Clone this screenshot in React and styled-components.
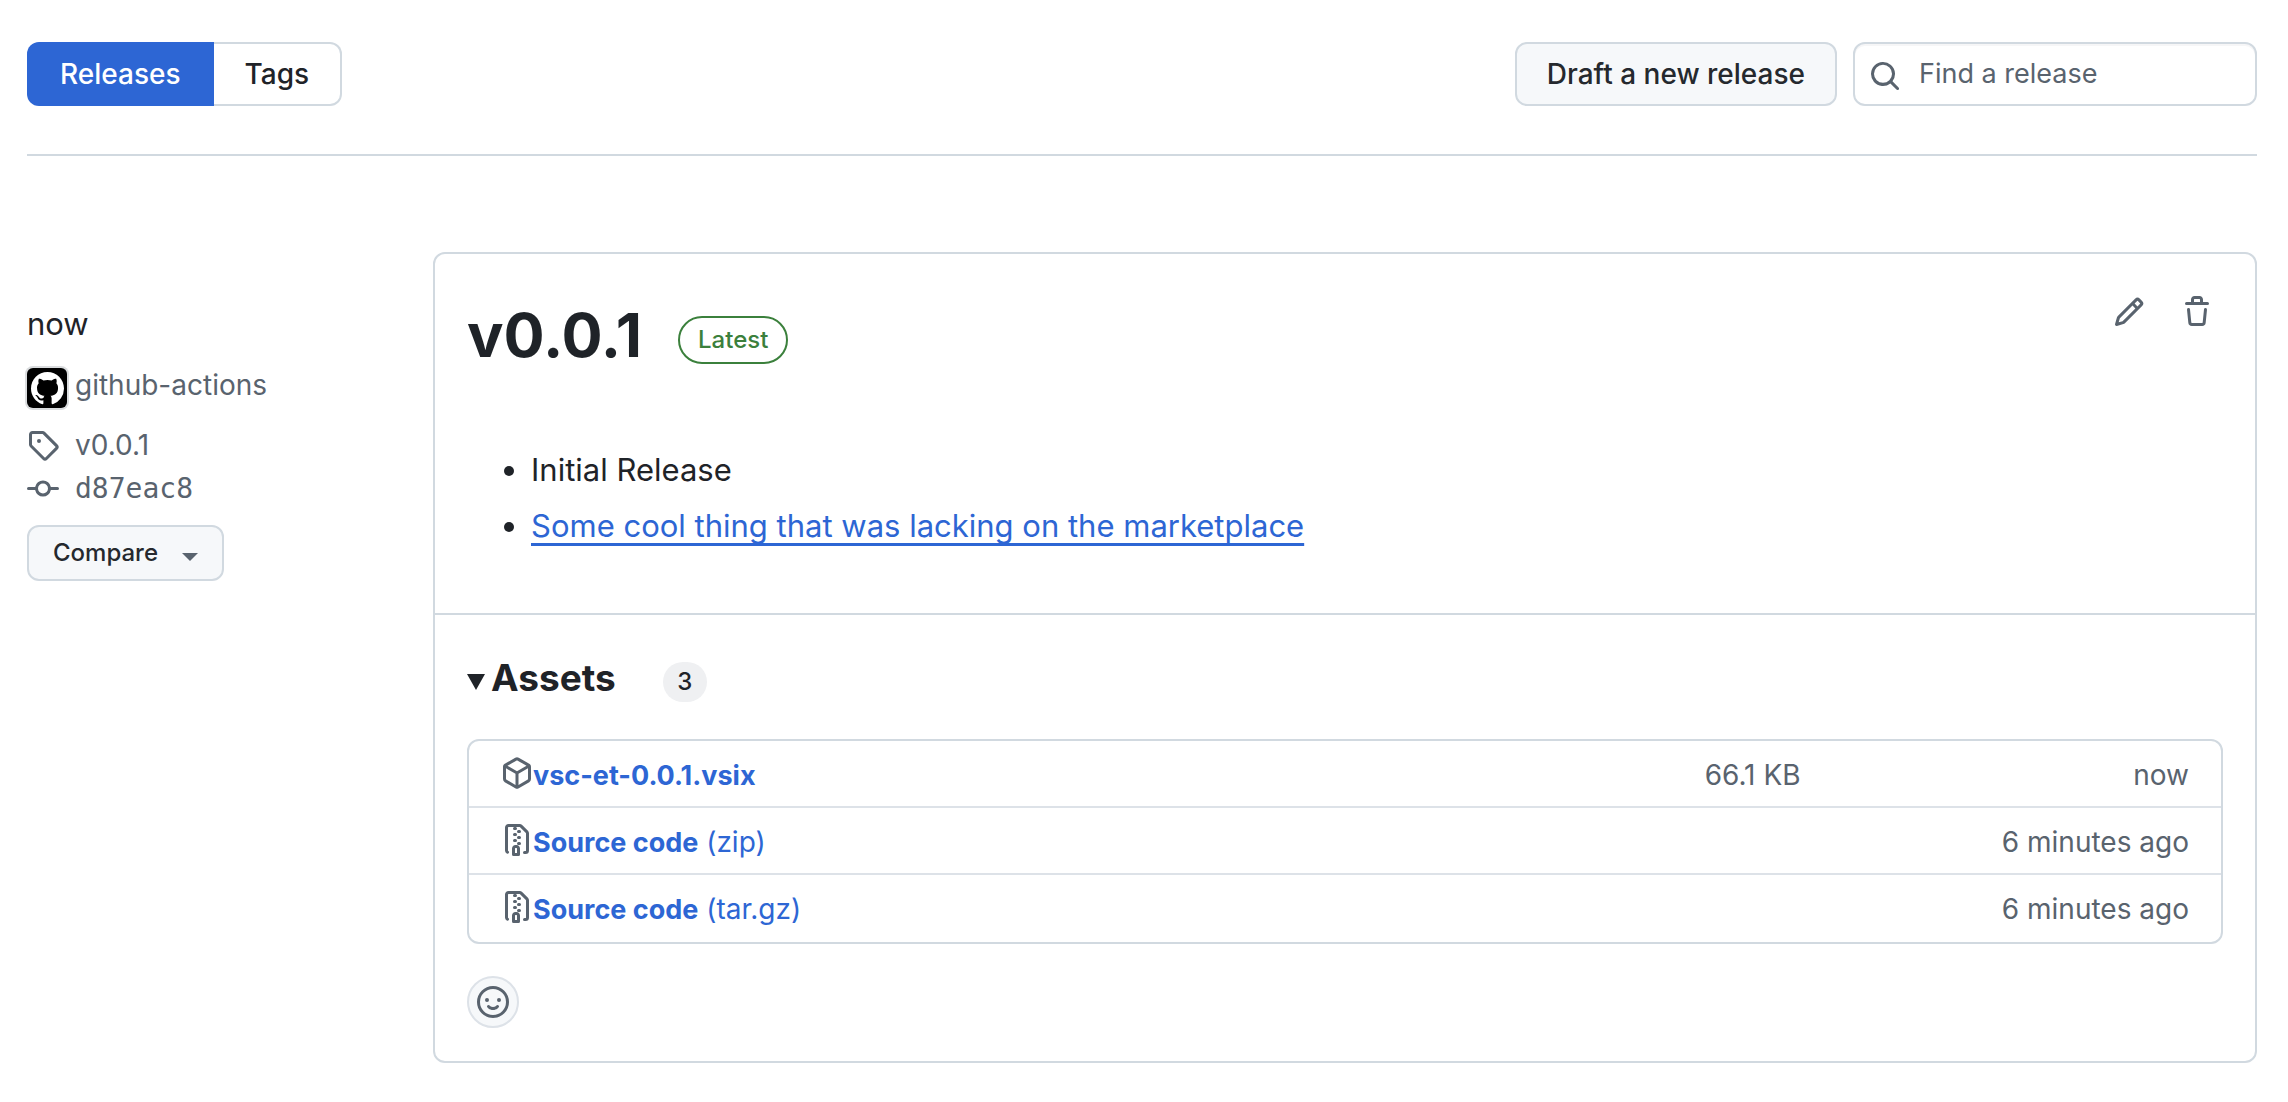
import React from "react";
import styled, { createGlobalStyle, css } from "styled-components";

const color = {
  text: "#1f2328",
  muted: "#59636e",
  border: "#d1d9e0",
  rowBorder: "#dde2e8",
  subtle: "#f6f8fa",
  accent: "#2d66d4",
  green: "#3b803c",
};

const GlobalStyle = createGlobalStyle`
  *, *::before, *::after { box-sizing: border-box; }
  body {
    margin: 0;
    background: #ffffff;
    color: ${color.text};
    font-family: Inter, "Liberation Sans", sans-serif;
    font-size: 28px;
    line-height: 42px;
  }
  button, input { font: inherit; color: inherit; }
  a { color: inherit; text-decoration: none; }
`;

const Page = styled.div`
  padding: 42px 31px 32px 27px;
`;

/* ---------- Header ---------- */

const Header = styled.header`
  display: flex;
  justify-content: space-between;
  align-items: center;
  padding-bottom: 48px;
  border-bottom: 2px solid ${color.border};
`;

const Tabs = styled.nav`
  display: flex;
`;

const Tab = styled.a`
  display: flex;
  align-items: center;
  height: 64px;
  padding: 0 31px;
  font-weight: 500;
  border: 2px solid ${color.border};
  border-left: 0;
  border-radius: 0 12px 12px 0;
  ${(p) =>
    p.$active &&
    css`
      padding: 0 33px;
      color: #ffffff;
      background: ${color.accent};
      border: 0;
      border-radius: 12px 0 0 12px;
    `}
`;

const Tools = styled.div`
  display: flex;
  gap: 16px;
`;

const Button = styled.button`
  display: flex;
  align-items: center;
  gap: 24px;
  height: ${(p) => (p.$small ? 56 : 64)}px;
  padding: 0 ${(p) => (p.$small ? 24 : 30)}px;
  font-size: ${(p) => (p.$small ? 24 : 28)}px;
  font-weight: 500;
  color: #25292e;
  background: ${color.subtle};
  border: 2px solid ${color.border};
  border-radius: 12px;
  cursor: pointer;
`;

const SearchBox = styled.label`
  display: flex;
  align-items: center;
  gap: 18px;
  width: 404px;
  height: 64px;
  padding: 0 14px;
  border: 2px solid ${color.border};
  border-radius: 12px;
  box-shadow: inset 0 2px 0 rgba(31, 35, 40, 0.04);
  color: ${color.muted};

  svg { margin-top: 4px; }
`;

const SearchInput = styled.input`
  flex: 1;
  min-width: 0;
  padding: 0;
  border: 0;
  outline: 0;
  background: transparent;
  font-size: 27px;
  &::placeholder { color: ${color.muted}; opacity: 1; }
`;

/* ---------- Release ---------- */

const Release = styled.section`
  display: grid;
  grid-template-columns: 374px minmax(0, 1fr);
  column-gap: 32px;
  align-items: start;
  margin-top: 96px;
`;

const Side = styled.aside`
  display: flex;
  flex-direction: column;
  align-items: flex-start;
  padding-top: 48px;
  color: ${color.muted};
`;

const Published = styled.time`
  font-size: 31px;
  line-height: 48px;
  color: ${color.text};
`;

const Author = styled.a`
  display: flex;
  align-items: flex-start;
  gap: 8px;
  margin: 16px 0;
`;

const Avatar = styled.span`
  display: flex;
  justify-content: center;
  align-items: center;
  width: 40px;
  height: 40px;
  margin-top: 4px;
  padding-top: 1px;
  color: #ffffff;
  background: #000000;
  border-radius: 6px;
  box-shadow: 0 0 0 2px #dadcde;
`;

const Refs = styled.div`
  display: flex;
  flex-direction: column;
  gap: 2px;
  margin-bottom: 15px;
`;

const RefLink = styled.a`
  display: flex;
  align-items: center;
  gap: 16px;
  height: 42px;
  font-family: ${(p) => (p.$mono ? '"DejaVu Sans Mono", monospace' : "inherit")};
`;

const Caret = styled.span`
  margin-top: 8px;
  border: 8px solid transparent;
  border-top-color: ${color.muted};
  border-bottom: 0;
`;

const Card = styled.article`
  border: 2px solid ${color.border};
  border-radius: 12px;
`;

const CardBody = styled.div`
  padding: 32px 32px 63px;
`;

const TitleRow = styled.div`
  display: flex;
  justify-content: space-between;
  align-items: flex-start;
`;

const TitleGroup = styled.div`
  display: flex;
  align-items: center;
  gap: 36px;
`;

const Title = styled.h2`
  margin: 0;
  font-size: 61px;
  line-height: 98px;
  font-weight: 700;
`;

const Latest = styled.span`
  display: flex;
  align-items: center;
  height: 48px;
  margin-top: 10px;
  padding: 0 18px;
  font-size: 24px;
  font-weight: 500;
  color: ${color.green};
  border: 2px solid ${color.green};
  border-radius: 24px;
`;

const Actions = styled.div`
  display: flex;
  gap: 16px;
`;

const IconButton = styled.button`
  display: flex;
  justify-content: center;
  align-items: center;
  width: 52px;
  height: 52px;
  padding: 0;
  color: ${color.muted};
  background: transparent;
  border: 0;
  cursor: pointer;
`;

const Notes = styled.ul`
  display: flex;
  flex-direction: column;
  gap: 8px;
  margin: 62px 0 0;
  padding-left: 64px;
  font-size: 31px;
  line-height: 48px;

  a {
    color: ${color.accent};
    text-decoration: underline 3px;
    text-underline-offset: 6px;
    text-decoration-skip-ink: none;
  }
`;

const CardFooter = styled.div`
  padding: 32px 32px 33px;
  border-top: 2px solid ${color.border};
`;

const Summary = styled.summary`
  display: flex;
  align-items: center;
  list-style: none;
  cursor: pointer;
  &::-webkit-details-marker { display: none; }
  &::before {
    content: "";
    margin: 8px 6px 0 0;
    border: 9px solid transparent;
    border-top: 16px solid ${color.text};
    border-bottom: 0;
  }
`;

const AssetsTitle = styled.h3`
  margin: 0;
  font-size: 37px;
  line-height: 62px;
  font-weight: 700;
`;

const Counter = styled.span`
  display: flex;
  justify-content: center;
  align-items: center;
  min-width: 44px;
  height: 40px;
  margin: 8px 0 0 47px;
  font-size: 24px;
  font-weight: 500;
  background: #eff0f2;
  border-radius: 20px;
`;

const AssetBox = styled.div`
  margin-top: 30px;
  border: 2px solid ${color.border};
  border-radius: 12px;
`;

const AssetTable = styled.table`
  width: 100%;
  table-layout: fixed;
  border-spacing: 0;
  line-height: 36px;
  color: ${color.muted};
`;

const AssetRow = styled.tr`
  &:not(:last-child) td { border-bottom: 2px solid ${color.rowBorder}; }
`;

const Cell = styled.td`
  width: ${(p) => p.$width};
  height: 67px;
  padding: 16px 0 0;
  vertical-align: top;
  text-align: right;
  &:first-child { padding-left: 32px; text-align: left; }
  &:last-child { padding-right: 32px; }
`;

const AssetName = styled.span`
  display: flex;
  align-items: flex-start;
  a { color: ${color.accent}; white-space: pre; }
  strong { font-size: 27px; font-weight: 700; }
`;

const ReactionButton = styled(IconButton)`
  margin-top: 32px;
  background: ${color.subtle};
  border: 2px solid ${color.rowBorder};
  border-radius: 50%;
`;

/* ---------- Icons ---------- */

const paths = {
  search:
    "M10.68 11.74a6 6 0 0 1-7.922-8.982 6 6 0 0 1 8.982 7.922l3.04 3.04a.749.749 0 0 1-.326 1.275.749.749 0 0 1-.734-.215ZM11.5 7a4.499 4.499 0 1 0-8.997 0A4.499 4.499 0 0 0 11.5 7Z",
  tag: "M1 7.775V2.75C1 1.784 1.784 1 2.75 1h5.025c.464 0 .91.184 1.238.513l6.25 6.25a1.75 1.75 0 0 1 0 2.474l-5.026 5.026a1.75 1.75 0 0 1-2.474 0l-6.25-6.25A1.752 1.752 0 0 1 1 7.775Zm1.5 0c0 .066.026.13.073.177l6.25 6.25a.25.25 0 0 0 .354 0l5.025-5.025a.25.25 0 0 0 0-.354l-6.25-6.25a.25.25 0 0 0-.177-.073H2.75a.25.25 0 0 0-.25.25ZM6 5a1 1 0 1 1 0 2 1 1 0 0 1 0-2Z",
  commit:
    "M11.93 8.5a4.002 4.002 0 0 1-7.86 0H.75a.75.75 0 0 1 0-1.5h3.32a4.002 4.002 0 0 1 7.86 0h3.32a.75.75 0 0 1 0 1.5Zm-1.43-.75a2.5 2.5 0 1 0-5 0 2.5 2.5 0 0 0 5 0Z",
  pencil:
    "M11.013 1.427a1.75 1.75 0 0 1 2.474 0l1.086 1.086a1.75 1.75 0 0 1 0 2.474l-8.61 8.61c-.21.21-.47.364-.756.445l-3.251.93a.75.75 0 0 1-.927-.928l.929-3.25c.081-.286.235-.547.445-.758l8.61-8.61Zm.176 4.823L9.75 4.81l-6.286 6.287a.253.253 0 0 0-.064.108l-.558 1.953 1.953-.558a.253.253 0 0 0 .108-.064Zm1.238-3.763a.25.25 0 0 0-.354 0L10.811 3.75l1.439 1.44 1.263-1.263a.25.25 0 0 0 0-.354Z",
  trash:
    "M11 1.75V3h2.25a.75.75 0 0 1 0 1.5H2.75a.75.75 0 0 1 0-1.5H5V1.75C5 .784 5.784 0 6.75 0h2.5C10.216 0 11 .784 11 1.75ZM4.496 6.675l.66 6.6a.25.25 0 0 0 .249.225h5.19a.25.25 0 0 0 .249-.225l.66-6.6a.75.75 0 0 1 1.492.149l-.66 6.6A1.748 1.748 0 0 1 10.595 15h-5.19a1.75 1.75 0 0 1-1.741-1.575l-.66-6.6a.75.75 0 1 1 1.492-.15ZM6.5 1.75V3h3V1.75a.25.25 0 0 0-.25-.25h-2.5a.25.25 0 0 0-.25.25Z",
  package:
    "m8.878.392 5.25 3.045c.54.314.872.89.872 1.514v6.098a1.75 1.75 0 0 1-.872 1.514l-5.25 3.045a1.75 1.75 0 0 1-1.756 0l-5.25-3.045A1.75 1.75 0 0 1 1 11.049V4.951c0-.624.332-1.201.872-1.514L7.122.392a1.75 1.75 0 0 1 1.756 0ZM7.875 1.69l-4.63 2.685L8 7.133l4.755-2.758-4.63-2.685a.248.248 0 0 0-.25 0ZM2.5 5.677v5.372c0 .09.047.171.125.216l4.625 2.683V8.432Zm6.25 8.271 4.625-2.683a.25.25 0 0 0 .125-.216V5.677L8.75 8.432Z",
  zip: "M3.5 1.75v11.5c0 .09.048.173.126.217a.75.75 0 0 1-.752 1.298A1.748 1.748 0 0 1 2 13.25V1.75C2 .784 2.784 0 3.75 0h5.586c.464 0 .909.185 1.237.513l2.914 2.914c.329.328.513.773.513 1.237v8.586A1.75 1.75 0 0 1 12.25 15h-.5a.75.75 0 0 1 0-1.5h.5a.25.25 0 0 0 .25-.25V4.664a.25.25 0 0 0-.073-.177L9.513 1.573a.25.25 0 0 0-.177-.073H7.25a.75.75 0 0 1 0 1.5h-.5a.75.75 0 0 1 0-1.5h-3a.25.25 0 0 0-.25.25Zm3.75 8.75h.5c.966 0 1.75.784 1.75 1.75v3a.75.75 0 0 1-.75.75h-2.5a.75.75 0 0 1-.75-.75v-3c0-.966.784-1.75 1.75-1.75ZM6 5.25a.75.75 0 0 1 .75-.75h.5a.75.75 0 0 1 0 1.5h-.5A.75.75 0 0 1 6 5.25Zm.75 2.25h.5a.75.75 0 0 1 0 1.5h-.5a.75.75 0 0 1 0-1.5Zm1.25-.75A.75.75 0 0 1 8.75 6h.5a.75.75 0 0 1 0 1.5h-.5A.75.75 0 0 1 8 6.75ZM8.75 3h.5a.75.75 0 0 1 0 1.5h-.5a.75.75 0 0 1 0-1.5ZM8 9.75A.75.75 0 0 1 8.75 9h.5a.75.75 0 0 1 0 1.5h-.5A.75.75 0 0 1 8 9.75Zm-1 2.5v2.25h1v-2.25a.25.25 0 0 0-.25-.25h-.5a.25.25 0 0 0-.25.25Z",
  smiley:
    "M8 0a8 8 0 1 1 0 16A8 8 0 0 1 8 0ZM1.5 8a6.5 6.5 0 1 0 13 0 6.5 6.5 0 0 0-13 0Zm3.82 1.636a.75.75 0 0 1 1.038.175l.007.009c.103.118.22.222.35.31.264.178.683.37 1.285.37.602 0 1.02-.192 1.285-.371.13-.088.247-.192.35-.31l.007-.008a.75.75 0 0 1 1.222.87c-.2.27-.45.5-.737.69-.474.322-1.18.63-2.127.63-.946 0-1.652-.308-2.126-.63a3.331 3.331 0 0 1-.737-.69.75.75 0 0 1 .183-1.044ZM12 7a1 1 0 1 1-2 0 1 1 0 0 1 2 0ZM5 8a1 1 0 1 1 0-2 1 1 0 0 1 0 2Z",
  github:
    "M8 0C3.58 0 0 3.58 0 8c0 3.54 2.29 6.53 5.47 7.59.4.07.55-.17.55-.38 0-.19-.01-.82-.01-1.49-2.01.37-2.53-.49-2.69-.94-.09-.23-.48-.94-.82-1.13-.28-.15-.68-.52-.01-.53.63-.01 1.08.58 1.23.82.72 1.21 1.87.87 2.33.66.07-.52.28-.87.51-1.07-1.78-.2-3.64-.89-3.64-3.95 0-.87.31-1.59.82-2.15-.08-.2-.36-1.02.08-2.12 0 0 .67-.21 2.2.82.64-.18 1.32-.27 2-.27.68 0 1.36.09 2 .27 1.53-1.04 2.2-.82 2.2-.82.44 1.1.16 1.92.08 2.12.51.56.82 1.27.82 2.15 0 3.07-1.87 3.75-3.65 3.95.29.25.54.73.54 1.48 0 1.07-.01 1.93-.01 2.2 0 .21.15.46.55.38A8.013 8.013 0 0 0 16 8c0-4.42-3.58-8-8-8z",
};

const Svg = styled.svg`
  display: block;
  flex: none;
  fill: currentColor;
`;

function Icon({ name, size = 32 }) {
  return (
    <Svg viewBox="0 0 16 16" width={size} height={size} aria-hidden="true">
      <path d={paths[name]} />
    </Svg>
  );
}

/* ---------- Page ---------- */

const assets = [
  { icon: "package", name: "vsc-et-0.0.1.vsix", size: "66.1 KB", time: "now" },
  { icon: "zip", name: "Source code", kind: "(zip)", time: "6 minutes ago" },
  { icon: "zip", name: "Source code", kind: "(tar.gz)", time: "6 minutes ago" },
];

export default function App() {
  return (
    <Page>
      <GlobalStyle />
      <Header>
        <Tabs aria-label="Releases and tags">
          <Tab href="#releases" $active aria-current="page">
            Releases
          </Tab>
          <Tab href="#tags">Tags</Tab>
        </Tabs>
        <Tools>
          <Button type="button">Draft a new release</Button>
          <SearchBox>
            <Icon name="search" />
            <SearchInput type="text" placeholder="Find a release" aria-label="Find a release" />
          </SearchBox>
        </Tools>
      </Header>

      <Release>
        <Side>
          <Published>now</Published>
          <Author href="#author">
            <Avatar>
              <Icon name="github" size={33} />
            </Avatar>
            github-actions
          </Author>
          <Refs>
            <RefLink href="#tag">
              <Icon name="tag" />
              v0.0.1
            </RefLink>
            <RefLink href="#commit" $mono>
              <Icon name="commit" />
              d87eac8
            </RefLink>
          </Refs>
          <Button type="button" $small>
            Compare
            <Caret />
          </Button>
        </Side>

        <Card>
          <CardBody>
            <TitleRow>
              <TitleGroup>
                <Title>v0.0.1</Title>
                <Latest>Latest</Latest>
              </TitleGroup>
              <Actions>
                <IconButton type="button" aria-label="Edit">
                  <Icon name="pencil" />
                </IconButton>
                <IconButton type="button" aria-label="Delete">
                  <Icon name="trash" />
                </IconButton>
              </Actions>
            </TitleRow>
            <Notes>
              <li>Initial Release</li>
              <li>
                <a href="#marketplace">Some cool thing that was lacking on the marketplace</a>
              </li>
            </Notes>
          </CardBody>

          <CardFooter>
            <details open>
              <Summary>
                <AssetsTitle>Assets</AssetsTitle>
                <Counter>3</Counter>
              </Summary>
              <AssetBox>
                <AssetTable>
                  <tbody>
                    {assets.map((asset) => (
                      <AssetRow key={asset.name + (asset.kind || "")}>
                        <Cell $width="58%">
                          <AssetName>
                            <Icon name={asset.icon} />
                            <a href="#download">
                              <strong>{asset.name}</strong>
                              {asset.kind && ` ${asset.kind}`}
                            </a>
                          </AssetName>
                        </Cell>
                        <Cell $width="18%">{asset.size}</Cell>
                        <Cell $width="24%">{asset.time}</Cell>
                      </AssetRow>
                    ))}
                  </tbody>
                </AssetTable>
              </AssetBox>
            </details>
            <ReactionButton type="button" aria-label="Add a reaction">
              <Icon name="smiley" />
            </ReactionButton>
          </CardFooter>
        </Card>
      </Release>
    </Page>
  );
}
